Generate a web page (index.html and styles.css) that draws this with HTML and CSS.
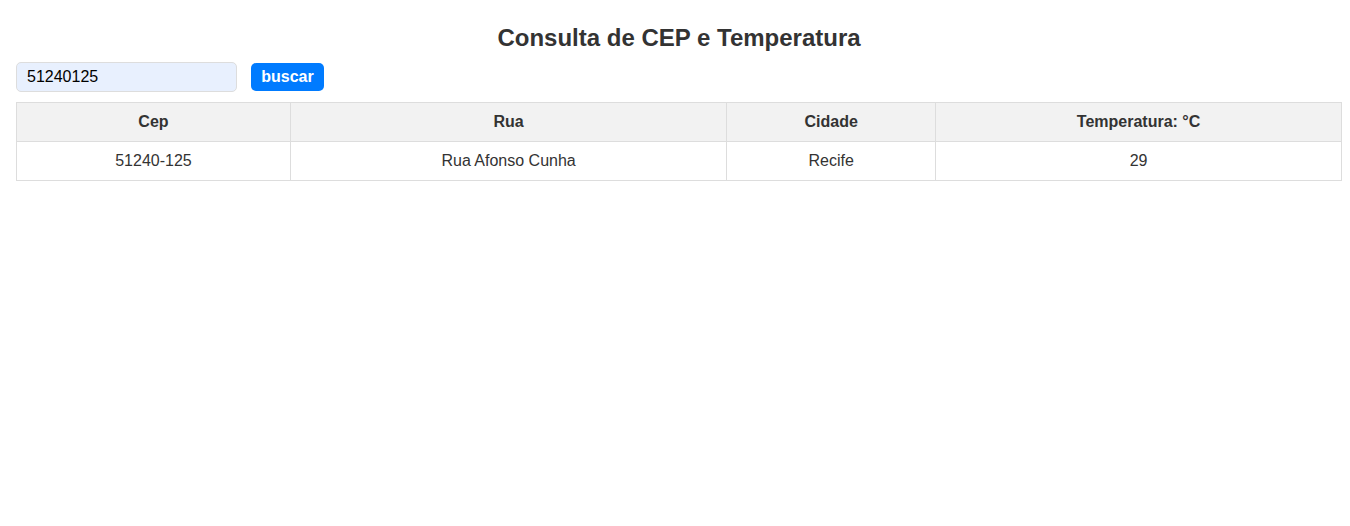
FILE: index.html
```html
<!DOCTYPE html>
<html lang="pt-BR">
<head>
  <meta charset="utf-8">
  <title>Consulta de CEP e Temperatura</title>
  <link rel="stylesheet" href="styles.css">
</head>
<body>
  <main class="page">
    <h1 class="title">Consulta de CEP e Temperatura</h1>
    <form class="search">
      <input class="search-input" type="text" value="51240125" aria-label="CEP">
      <button class="search-button" type="button">buscar</button>
    </form>
    <table class="results">
      <thead>
        <tr><th>Cep</th><th>Rua</th><th>Cidade</th><th>Temperatura: °C</th></tr>
      </thead>
      <tbody>
        <tr><td>51240-125</td><td>Rua Afonso Cunha</td><td>Recife</td><td>29</td></tr>
      </tbody>
    </table>
  </main>
</body>
</html>
```

FILE: styles.css
```css
* {
  box-sizing: border-box;
}

body {
  margin: 0;
  background: #fff;
  color: #333;
  font-family: "Liberation Sans", Arial, sans-serif;
  font-size: 16px;
}

.page {
  padding: 24px 8px 16px 16px;
}

.title {
  margin: 0 0 10px;
  font-size: 24px;
  line-height: 28px;
  text-align: center;
}

.search {
  display: flex;
  align-items: center;
  gap: 14px;
  margin-bottom: 10px;
}

.search-input {
  width: 221px;
  height: 30px;
  padding: 0 10px;
  border: 1px solid #ddd;
  border-radius: 5px;
  background: #e8f0fe;
  color: #000;
  font: inherit;
}

.search-button {
  min-width: 73px;
  height: 28px;
  padding: 0 10px;
  border: 0;
  border-radius: 5px;
  background: #007bff;
  color: #fff;
  font: inherit;
  font-weight: bold;
}

.results {
  width: 100%;
  border-collapse: collapse;
}

.results th,
.results td {
  padding: 10px;
  border: 1px solid #ddd;
  line-height: 18px;
  text-align: center;
}

.results th {
  background: #f2f2f2;
}
```
